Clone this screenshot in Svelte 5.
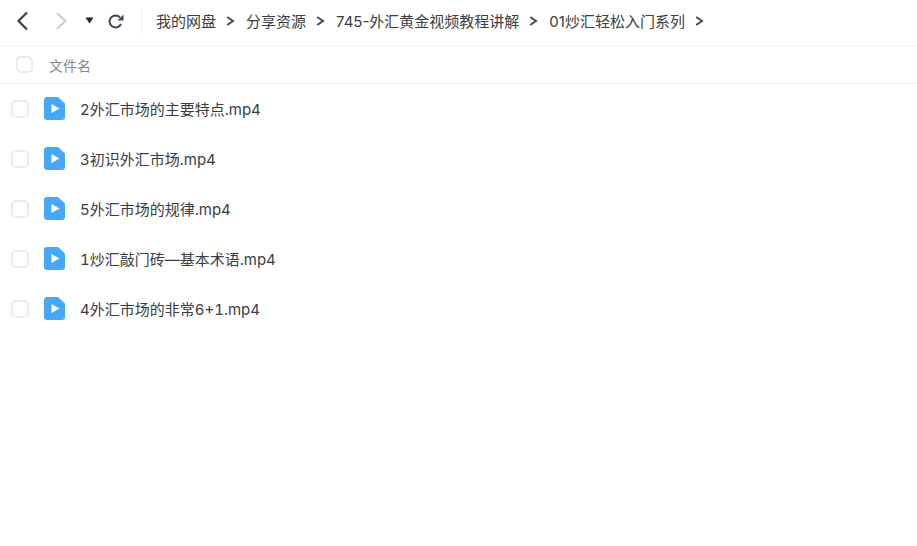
<script>
  const crumbs = ['我的网盘', '分享资源', '745-外汇黄金视频教程讲解', '01炒汇轻松入门系列'];
  const files = [
    '2外汇市场的主要特点.mp4',
    '3初识外汇市场.mp4',
    '5外汇市场的规律.mp4',
    '1炒汇敲门砖—基本术语.mp4',
    '4外汇市场的非常6+1.mp4'
  ];
</script>

<div class="page">
  <div class="toolbar">
    <button class="nav back" aria-label="后退">
      <svg width="16" height="20" viewBox="0 0 16 20"><path d="M13 1.500 4.500 10 13 18.500" fill="none" stroke="#3a3f4b" stroke-width="2.200"/></svg>
    </button>
    <button class="nav forward" aria-label="前进">
      <svg width="16" height="20" viewBox="0 0 16 20"><path d="M3 2 11.500 10 3 18" fill="none" stroke="#c9cbd0" stroke-width="2"/></svg>
    </button>
    <button class="nav drop" aria-label="历史">
      <svg width="9" height="7" viewBox="0 0 9 7"><path d="M0.500 0.500h8L4.500 6.500z" fill="#22252c"/></svg>
    </button>
    <button class="nav refresh" aria-label="刷新">
      <svg width="16" height="16" viewBox="0 0 16 16">
        <path d="M13 11a6 6 0 1 1-1-6.600" fill="none" stroke="#3f444f" stroke-width="2"/>
        <path d="M15.500 1.500v6h-6z" fill="#3f444f"/>
      </svg>
    </button>
    <span class="divider"></span>
    <nav class="crumbs">
      {#each crumbs as crumb}
        <span class="crumb">{crumb}</span>
        <svg class="sep" width="9" height="10" viewBox="0 0 9 10"><path d="M1.200 1 7 5 1.200 9" fill="none" stroke="#454a55" stroke-width="2"/></svg>
      {/each}
    </nav>
  </div>

  <div class="head">
    <span class="check"></span>
    <span class="head-label">文件名</span>
  </div>

  <ul class="list">
    {#each files as file}
      <li>
        <span class="check"></span>
        <svg class="file-icon" width="21" height="23" viewBox="0 0 21 23">
          <path d="M3 0h11l7 6.500V20a3 3 0 0 1-3 3H3a3 3 0 0 1-3-3V3a3 3 0 0 1 3-3z" fill="#45a8fb"/>
          <path d="M7.500 7 15.500 11.500l-8 4.500z" fill="#fff"/>
        </svg>
        <span class="name">{file}</span>
      </li>
    {/each}
  </ul>
</div>

<style>
  :global(body) {
    background: #fff;
  }

  .page {
    width: 917px;
    height: 546px;
    overflow: hidden;
    font-family: Inter, "Noto Sans CJK SC", sans-serif;
    font-size: 15px;
    color: #3b3d42;
  }

  .toolbar {
    display: flex;
    align-items: center;
    box-sizing: border-box;
    height: 46px;
    padding: 0 0 4px 14px;
    border-bottom: 1px solid #f1f2f4;
  }

  .nav {
    display: flex;
    align-items: center;
    justify-content: center;
    padding: 0;
    border: none;
    background: none;
  }

  .forward {
    margin-left: 24px;
  }

  .drop {
    margin-left: 15px;
  }

  .refresh {
    margin-left: 14px;
  }

  .divider {
    width: 1px;
    height: 24px;
    margin: 0 14px 0 17px;
    background: #eceef1;
  }

  .crumbs {
    display: flex;
    align-items: center;
  }

  .crumb {
    white-space: nowrap;
  }

  .sep {
    margin: 0 11px 0 10px;
  }

  .head {
    display: flex;
    align-items: center;
    height: 37px;
    padding-left: 16px;
    border-bottom: 1px solid #f1f2f4;
  }

  .head-label {
    margin-left: 16px;
    font-size: 14px;
    color: #85878c;
  }

  .check {
    flex: none;
    box-sizing: border-box;
    width: 17px;
    height: 17px;
    border: 2px solid #e9ebee;
    border-radius: 5px;
    background: #fff;
  }

  .list {
    margin: 0;
    padding: 0;
    list-style: none;
  }

  li {
    display: flex;
    align-items: center;
    height: 50px;
    padding-left: 11px;
  }

  li .check {
    width: 18px;
    height: 18px;
  }

  .file-icon {
    flex: none;
    margin: 0 0 1px 15px;
  }

  .name {
    margin: 0 0 2px 15px;
    white-space: nowrap;
    font-variant-numeric: tabular-nums;
  }
</style>
